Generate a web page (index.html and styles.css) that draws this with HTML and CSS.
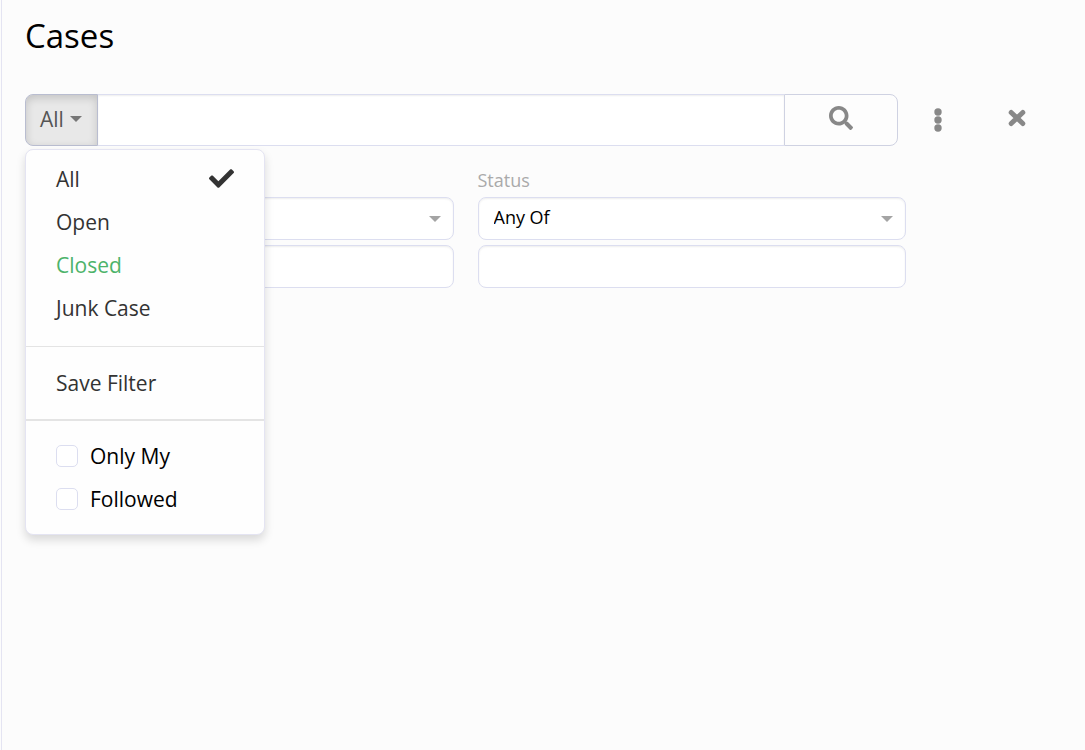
FILE: index.html
```
<!DOCTYPE html>
<html lang="en">
<head>
<meta charset="utf-8">
<title>Cases</title>
<link rel="stylesheet" href="styles.css">
</head>
<body>
<main class="page">
  <h1 class="title">Cases</h1>
  <div class="search-row">
    <div class="search-group">
      <button class="filter-toggle" type="button" aria-expanded="true">All
        <svg class="caret" viewBox="0 0 12 6" aria-hidden="true"><path d="M0 0h12L6 6z"/></svg>
      </button>
      <input class="search-input" type="text" aria-label="Search">
      <button class="search-button" type="button" aria-label="Search">
        <svg class="icon-search" viewBox="0 0 512 512" aria-hidden="true"><path d="M505 442.700L405.300 343c-4.500-4.500-10.600-7-17-7H372c27.600-35.300 44-79.700 44-128C416 93.100 322.900 0 208 0S0 93.100 0 208s93.100 208 208 208c48.300 0 92.700-16.400 128-44v16.300c0 6.400 2.500 12.500 7 17l99.700 99.700c9.400 9.400 24.600 9.400 33.900 0l28.300-28.300c9.400-9.400 9.400-24.600.1-34zM208 336c-70.700 0-128-57.200-128-128 0-70.700 57.200-128 128-128 70.700 0 128 57.200 128 128 0 70.700-57.200 128-128 128z"/></svg>
      </button>
      <div class="menu">
        <button class="menu-item" type="button">All
          <svg class="icon-check" viewBox="0 0 512 512" aria-hidden="true"><path d="M173.900 439.400l-166.400-166.400c-10-10-10-26.200 0-36.200l36.200-36.200c10-10 26.200-10 36.200 0L192 312.700 432.100 72.600c10-10 26.200-10 36.200 0l36.200 36.200c10 10 10 26.200 0 36.200l-294.400 294.400c-10 10-26.200 10-36.200 0z"/></svg>
        </button>
        <button class="menu-item" type="button">Open</button>
        <button class="menu-item menu-item-success" type="button">Closed</button>
        <button class="menu-item" type="button">Junk Case</button>
        <hr class="divider">
        <button class="menu-item" type="button">Save Filter</button>
        <hr class="divider divider-thick">
        <label class="menu-check"><input class="checkbox" type="checkbox">Only My</label>
        <label class="menu-check"><input class="checkbox" type="checkbox">Followed</label>
      </div>
    </div>
    <button class="icon-button" type="button" aria-label="More">
      <svg class="icon-dots" viewBox="0 0 8 24" aria-hidden="true"><circle cx="4" cy="4" r="3.700"/><circle cx="4" cy="12" r="3.700"/><circle cx="4" cy="20" r="3.700"/></svg>
    </button>
    <button class="icon-button" type="button" aria-label="Close">
      <svg class="icon-close" viewBox="0 0 18 18" aria-hidden="true"><path d="M3.200 3.500l11.600 11M14.800 3.500L3.200 14.500"/></svg>
    </button>
  </div>
  <div class="filters">
    <div class="field">
      <span class="field-label"></span>
      <div class="select-wrap">
        <select class="control select" aria-label="Filter type"><option></option></select>
        <svg class="caret select-caret" viewBox="0 0 12 6" aria-hidden="true"><path d="M0 0h12L6 6z"/></svg>
      </div>
      <input class="control" type="text" aria-label="Filter value">
    </div>
    <div class="field">
      <label class="field-label" for="status">Status</label>
      <div class="select-wrap">
        <select class="control select" id="status"><option>Any Of</option></select>
        <svg class="caret select-caret" viewBox="0 0 12 6" aria-hidden="true"><path d="M0 0h12L6 6z"/></svg>
      </div>
      <input class="control" type="text" aria-label="Status values">
    </div>
  </div>
</main>
</body>
</html>
```
FILE: styles.css
```
* { box-sizing: border-box; }
body {
  margin: 0 0 0 1px;
  background: #fcfcfc;
  color: #000;
  font-family: "Open Sans", sans-serif;
  font-size: 21px;
}
button, input, select { font: inherit; color: inherit; margin: 0; }
button { cursor: pointer; }
.page {
  min-height: 100vh;
  padding: 12px 29px 24px 23px;
  border-left: 1px solid #e4e4f2;
}
.title {
  margin: 0 0 34px;
  font-size: 33px;
  line-height: 48px;
  font-weight: 400;
}
.search-row { display: flex; align-items: stretch; height: 52px; }
.search-group { position: relative; display: flex; flex: 1; min-width: 0; }
.filter-toggle {
  display: flex;
  align-items: center;
  gap: 6px;
  padding: 0 15px 2px 14px;
  border: 1px solid #b9bdd0;
  border-radius: 8px 0 0 8px;
  background: #e8e8e8;
  box-shadow: inset 0 3px 8px rgba(0, 0, 0, 0.16);
  color: #555;
}
.caret { width: 12px; height: 6px; fill: #777; }
.search-input {
  flex: 1;
  min-width: 0;
  padding: 0 15px;
  border: 1px solid #dcdef0;
  border-width: 1px 0;
  background: #fff;
  box-shadow: inset 0 1px 2px rgba(0, 0, 0, 0.07);
  outline: 0;
}
.search-button {
  width: 114px;
  padding: 0 0 4px;
  border: 1px solid #cfd2e2;
  border-radius: 0 8px 8px 0;
  background: #fdfdfd;
}
.icon-search { display: block; width: 24px; height: 24px; margin: 0 auto; fill: #888; }
.icon-button {
  display: flex;
  align-items: center;
  justify-content: center;
  width: 79px;
  padding: 0;
  border: 0;
  background: none;
}
.icon-dots { width: 8px; height: 24px; fill: #888; }
.icon-close {
  width: 18px;
  height: 18px;
  margin-bottom: 4px;
  fill: none;
  stroke: #888;
  stroke-width: 5;
  stroke-linecap: round;
}
.menu {
  position: absolute;
  z-index: 1;
  top: 100%;
  left: 0;
  width: 240px;
  margin-top: 3px;
  padding: 7px 0 14px;
  border: 1px solid #e4e4f2;
  border-radius: 8px;
  background: #fefefe;
  box-shadow: 0 5px 10px rgba(0, 0, 0, 0.14);
}
.menu-item, .menu-check {
  display: flex;
  align-items: center;
  width: 100%;
  height: 43px;
  padding: 0 30px;
  border: 0;
  background: none;
  text-align: left;
}
.menu-item { justify-content: space-between; color: #333; }
.menu-item-success { color: #4cb36a; }
.menu-check { gap: 12px; }
.icon-check { width: 25px; height: 25px; fill: #333; }
.divider { height: 1px; margin: 17px 0 14px; border: 0; background: #e4e4e4; }
.divider-thick { height: 2px; margin: 15px 0 13px; }
.checkbox {
  appearance: none;
  width: 22px;
  height: 22px;
  border: 1px solid #dcdef0;
  border-radius: 5px;
  background: #fff;
}
.filters {
  display: grid;
  grid-template-columns: 1fr 1fr;
  gap: 24px;
  padding-right: 150px;
  margin-top: 22px;
}
.field { display: flex; flex-direction: column; gap: 5px; }
.field-label { height: 24px; line-height: 24px; font-size: 18px; color: #aaa; }
.select-wrap { display: grid; align-items: center; }
.control {
  width: 100%;
  height: 43px;
  padding: 0 15px 3px;
  border: 1px solid #dcdef0;
  border-radius: 8px;
  background: #fff;
  box-shadow: inset 0 1px 2px rgba(0, 0, 0, 0.07);
  font-size: 18px;
  outline: 0;
}
.select { appearance: none; grid-area: 1 / 1; }
.select-caret {
  grid-area: 1 / 1;
  justify-self: end;
  margin-right: 13px;
  fill: #a4a4a4;
  pointer-events: none;
}
```
